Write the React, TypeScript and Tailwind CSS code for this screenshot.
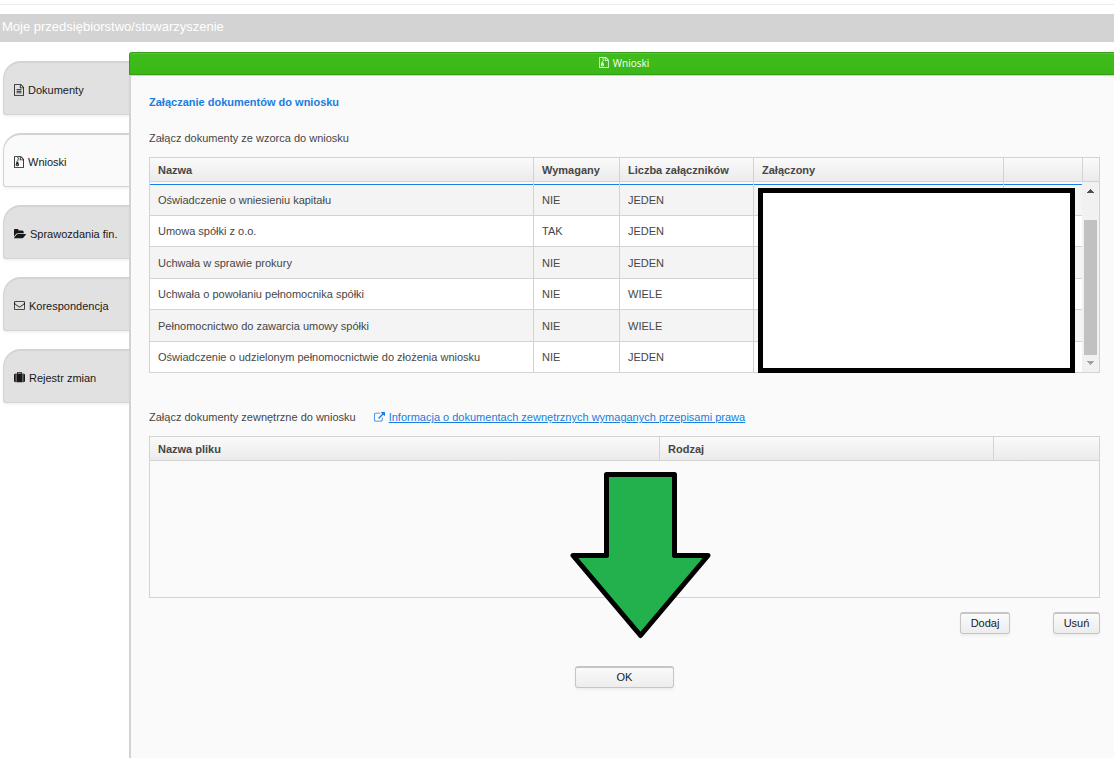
import React from "react";

const PAGE_OUTLINE =
  "M1596 380q28 28 48 76t20 88v1152q0 40-28 68t-68 28h-1344q-40 0-68-28t-28-68v-1600q0-40 28-68t68-28h896q40 0 88 20t76 48zm-444-244v376h376q-10-29-22-41l-313-313q-12-12-41-22zm384 1528v-1024h-416q-40 0-68-28t-28-68v-416h-768v1536h1280z";

const ICONS = {
  document:
    PAGE_OUTLINE +
    "m-1024-864q0-14 9-23t23-9h704q14 0 23 9t9 23v64q0 14-9 23t-23 9h-704q-14 0-23-9t-9-23v-64zm736 224q14 0 23 9t9 23v64q0 14-9 23t-23 9h-704q-14 0-23-9t-9-23v-64q0-14 9-23t23-9h704zm0 256q14 0 23 9t9 23v64q0 14-9 23t-23 9h-704q-14 0-23-9t-9-23v-64q0-14 9-23t23-9h704z",
  archive:
    PAGE_OUTLINE +
    "M640 128h128v128h-128zM768 256h128v128h-128zM640 384h128v128h-128zM768 512h128v128h-128zM640 640h128v128h-128zM781 943l107 349q8 27 8 52 0 83-72.500 137.500t-183.500 54.500-183.500-54.500-72.500-137.500q0-25 8-52 21-63 120-396v-128h128v128h79q22 0 39 13t23 34zm-141 465q53 0 90.500-19t37.500-45-37.500-45-90.500-19-90.500 19-37.500 45 37.500 45 90.500 19z",
  folder:
    "M1815 952q0 31-31 66l-336 396q-43 51-120.500 86.500t-143.500 35.500h-1088q-34 0-60.500-13t-26.500-43q0-31 31-66l336-396q43-51 120.500-86.500t143.500-35.500h1088q34 0 60.500 13t26.500 43zm-343-344v160h-832q-94 0-197 47.500t-164 119.500l-337 396-5 6q0-4-.5-12.500t-.5-12.500v-960q0-92 66-158t158-66h320q92 0 158 66t66 158v32h544q92 0 158 66t66 158z",
  envelope:
    "M1664 1504v-768q-32 36-69 66-268 206-426 338-51 43-83 67t-86.500 48.500-102.500 24.500h-2q-48 0-102.500-24.500t-86.500-48.500-83-67q-158-132-426-338-37-30-69-66v768q0 13 9.500 22.500t22.500 9.500h1472q13 0 22.500-9.500t9.500-22.500zm0-1051v-24.500l-.5-13-3-12.500-5.500-9-9-7.500-14-2.500h-1472q-13 0-22.500 9.500t-9.500 22.500q0 168 147 284 193 152 401 317 6 5 35 29.500t46 37.500 44.500 31.500 50.500 27.500 43 9h2q20 0 43-9t50.500-27.500 44.500-31.500 46-37.500 35-29.500q208-165 401-317 54-43 100.500-115.500t46.500-131.500zm128-37v1088q0 66-47 113t-113 47h-1472q-66 0-113-47t-47-113v-1088q0-66 47-113t113-47h1472q66 0 113 47t47 113z",
  suitcase:
    "M640 256h512v-128h-512v128zm-352 0v1408h-64q-92 0-158-66t-66-158v-960q0-92 66-158t158-66h64zm1120 0v1408h-1024v-1408h128v-160q0-40 28-68t68-28h576q40 0 68 28t28 68v160h128zm384 224v960q0 92-66 158t-158 66h-64v-1408h64q92 0 158 66t66 158z",
  external:
    "M1408 928v320q0 119-84.500 203.500t-203.500 84.500h-832q-119 0-203.500-84.500t-84.500-203.500v-832q0-119 84.500-203.500t203.500-84.500h704q14 0 23 9t9 23v64q0 14-9 23t-23 9h-704q-66 0-113 47t-47 113v832q0 66 47 113t113 47h832q66 0 113-47t47-113v-320q0-14 9-23t23-9h64q14 0 23 9t9 23zm384-864v512q0 26-19 45t-45 19-45-19l-176-176-652 652q-10 10-23 10t-23-10l-114-114q-10-10-10-23t10-23l652-652-176-176q-19-19-19-45t19-45 45-19h512q26 0 45 19t19 45z",
};

type IconName = keyof typeof ICONS;

const VIEW_BOXES: Record<IconName, string> = {
  document: "128 0 1536 1792",
  archive: "128 0 1536 1792",
  folder: "0 0 1820 1792",
  envelope: "0 128 1792 1664",
  suitcase: "0 0 1792 1792",
  external: "0 0 1792 1792",
};

function Icon({ name, className }: { name: IconName; className: string }) {
  return (
    <svg viewBox={VIEW_BOXES[name]} className={`shrink-0 fill-current ${className}`} aria-hidden="true">
      <path d={ICONS[name]} />
    </svg>
  );
}

const MENU: { label: string; icon: IconName; size: string; active?: boolean }[] = [
  { label: "Dokumenty", icon: "document", size: "h-3 w-[10px]" },
  { label: "Wnioski", icon: "archive", size: "h-3 w-[10px]", active: true },
  { label: "Sprawozdania fin.", icon: "folder", size: "h-3 w-3" },
  { label: "Korespondencja", icon: "envelope", size: "h-[11px] w-[11px]" },
  { label: "Rejestr zmian", icon: "suitcase", size: "h-[11px] w-[11px]" },
];

const ROWS = [
  ["Oświadczenie o wniesieniu kapitału", "NIE", "JEDEN"],
  ["Umowa spółki z o.o.", "TAK", "JEDEN"],
  ["Uchwała w sprawie prokury", "NIE", "JEDEN"],
  ["Uchwała o powołaniu pełnomocnika spółki", "NIE", "WIELE"],
  ["Pełnomocnictwo do zawarcia umowy spółki", "NIE", "WIELE"],
  ["Oświadczenie o udzielonym pełnomocnictwie do złożenia wniosku", "NIE", "JEDEN"],
];

const headFill = "bg-linear-to-b from-[#fafafa] to-[#ebebeb]";
const th = `h-6 border-r border-b border-[#d3d3d3] px-2 text-left font-bold last:border-r-0 ${headFill}`;
const td = "border-r border-[#d3d3d3] px-2 last:border-r-0";
const firstRowTd =
  "pt-[2px] bg-[linear-gradient(#fafafa_2px,#197de1_2px,#197de1_3px,transparent_3px)]";

function rowHeight(index: number) {
  if (index === 0) return "h-[34px] border-b";
  if (index === ROWS.length - 1) return "h-[30px]";
  return index % 2 === 0 ? "h-8 border-b" : "h-[31px] border-b";
}

function Button({ children, className }: { children: React.ReactNode; className: string }) {
  return (
    <button
      type="button"
      className={`h-[22px] rounded-[3px] border border-t-2 border-[#c5c5c5] bg-linear-to-b from-[#fafafa] to-[#ededed] pb-[2px] text-[11px] leading-4 text-[#191919] shadow-[0_2px_3px_rgba(0,0,0,0.05)] ${className}`}
    >
      {children}
    </button>
  );
}

function TemplateTable() {
  return (
    <div className="relative mt-[11px] flex border border-[#d3d3d3]">
      <table className="flex-1 table-fixed border-separate border-spacing-0">
        <colgroup>
          <col />
          <col className="w-[86px]" />
          <col className="w-[134px]" />
          <col className="w-[250px]" />
          <col className="w-[78px]" />
        </colgroup>
        <thead>
          <tr>
            <th className={th}>Nazwa</th>
            <th className={th}>Wymagany</th>
            <th className={th}>Liczba załączników</th>
            <th className={th}>Załączony</th>
            <th className={th} aria-label="Akcje" />
          </tr>
        </thead>
        <tbody>
          {ROWS.map((row, r) => {
            const cellClass = `${td} ${rowHeight(r)} ${r === 0 ? firstRowTd : ""}`;
            return (
              <tr key={row[0]} className="odd:bg-[#f4f4f4] even:bg-white">
                {row.map((cell, i) => (
                  <td key={i} className={cellClass}>
                    {cell}
                  </td>
                ))}
                <td className={cellClass} />
                <td className={cellClass} />
              </tr>
            );
          })}
        </tbody>
      </table>
      <div className="flex w-[17px] flex-col" aria-hidden="true">
        <div className={`h-6 border-b border-l border-[#d3d3d3] ${headFill}`} />
        <div className="flex flex-1 flex-col items-center bg-[#f1f1f1]">
          <svg viewBox="0 0 7 4" className="mt-[7px] h-1 w-[7px] fill-[#505050]">
            <path d="M3 0h1v1h1v1h1v1h1v1H0V3h1V2h1V1h1z" />
          </svg>
          <div className="mt-[27px] w-[13px] flex-1 bg-[#c1c1c1]" />
          <svg viewBox="0 0 7 4" className="mt-[6px] mb-[7px] h-1 w-[7px] fill-[#a3a3a3]">
            <path d="M0 0h7v1H6v1H5v1H4v1H3V3H2V2H1V1H0z" />
          </svg>
        </div>
      </div>
      <div className="absolute top-[30px] right-6 -bottom-px w-[317px] border-5 border-black bg-white" />
    </div>
  );
}

function ExternalTable() {
  return (
    <div className="relative mt-[11px] h-[162px] border border-[#d3d3d3]">
      <table className="w-full table-fixed border-separate border-spacing-0">
        <colgroup>
          <col />
          <col className="w-[334px]" />
          <col className="w-[105px]" />
        </colgroup>
        <thead>
          <tr>
            <th className={th}>Nazwa pliku</th>
            <th className={th}>Rodzaj</th>
            <th className={th} aria-label="Akcje" />
          </tr>
        </thead>
      </table>
      <svg
        viewBox="0 0 141 168"
        className="absolute top-[34px] left-[calc(50%-55px)] h-[168px] w-[141px]"
        aria-hidden="true"
      >
        <path
          d="M36.500 3.500H104.500V84.500H138L70.500 164.500L3 84.500H36.500Z"
          fill="#22b14c"
          stroke="#000"
          strokeWidth="5"
          strokeLinejoin="round"
        />
      </svg>
    </div>
  );
}

export default function App() {
  return (
    <div className="flex min-h-screen flex-col bg-white font-['Liberation_Sans',Arial,sans-serif] text-[11px] leading-4 text-[#464646]">
      <div className="mt-1 border-t border-[#ebebeb]" />
      <header className="mt-[9px] flex h-7 items-center bg-[#d3d3d3] px-[2px] pb-[2px]">
        <h1 className="text-[13px] leading-4 text-white">Moje przedsiębiorstwo/stowarzyszenie</h1>
      </header>
      <div className="flex flex-1 pt-[10px]">
        <nav className="flex w-[129px] shrink-0 flex-col gap-[18px] pt-[9px] pl-[3px]">
          {MENU.map((item) => (
            <a
              key={item.label}
              href="#"
              aria-current={item.active ? "page" : undefined}
              className={`flex h-[54px] items-center gap-1 rounded-tl-[18px] rounded-bl-[3px] border-t-2 border-b border-l border-[#d3d3d3] pt-[2px] pl-[10px] text-[#191919] shadow-[0_2px_3px_rgba(0,0,0,0.05)] ${item.active ? "bg-[#fafafa]" : "bg-[#e1e1e1]"}`}
            >
              <Icon name={item.icon} className={item.size} />
              <span>{item.label}</span>
            </a>
          ))}
        </nav>
        <div className="flex min-w-0 flex-1 flex-col">
          <div className="flex h-[23px] items-center justify-center gap-1 rounded-tl-[3px] border border-r-0 border-[#359c19] bg-linear-to-b from-[#40bd1c] to-[#3bb817] pb-[2px] pl-1 font-['Open_Sans',sans-serif] text-[10px] font-medium text-white shadow-[inset_0_1px_0_#4fcf2b]">
            <Icon name="archive" className="h-[11px] w-[10px]" />
            <span>Wnioski</span>
          </div>
          <main className="flex-1 border-t border-l-2 border-[#d3d3d3] bg-[#fafafa] pt-[18px] pr-[14px] pb-8 pl-[18px]">
            <h2 className="font-bold text-[#197de1]">Załączanie dokumentów do wniosku</h2>
            <p className="mt-5">Załącz dokumenty ze wzorca do wniosku</p>
            <TemplateTable />
            <div className="mt-9 flex items-center gap-[18px]">
              <p>Załącz dokumenty zewnętrzne do wniosku</p>
              <a href="#" className="flex items-center gap-1 text-[#197de1]">
                <Icon name="external" className="h-[11px] w-[11px]" />
                <span className="underline">
                  Informacja o dokumentach zewnętrznych wymaganych przepisami prawa
                </span>
              </a>
            </div>
            <ExternalTable />
            <div className="mt-[14px] flex justify-end gap-[43px]">
              <Button className="w-[50px]">Dodaj</Button>
              <Button className="w-[47px]">Usuń</Button>
            </div>
            <div className="mt-8 flex justify-center">
              <Button className="w-[99px]">OK</Button>
            </div>
          </main>
        </div>
      </div>
    </div>
  );
}
